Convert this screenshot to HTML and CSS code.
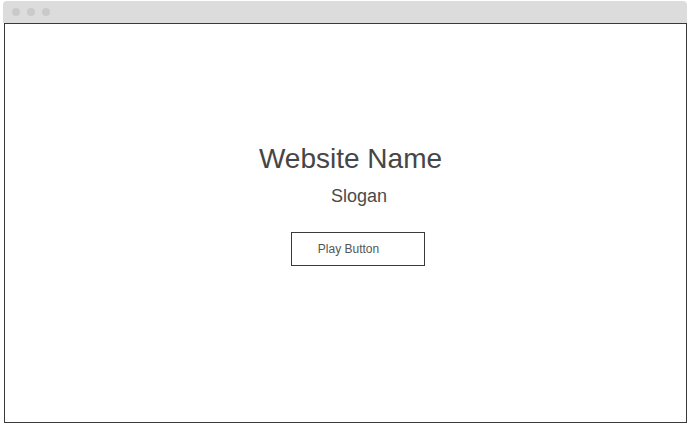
FILE: index.html
```html
<!DOCTYPE html>
<html>
<head>
<meta charset="utf-8">
<link rel="stylesheet" href="styles.css">
</head>
<body>
<div class="window">
  <div class="titlebar">
    <span class="dot"></span>
    <span class="dot"></span>
    <span class="dot"></span>
  </div>
  <div class="content">
    <h1 class="title">Website Name</h1>
    <p class="slogan">Slogan</p>
    <button class="play">Play Button</button>
  </div>
</div>
</body>
</html>
```

FILE: styles.css
```css
html, body {
  margin: 0;
  padding: 0;
  background: #ffffff;
}

body {
  font-family: "Liberation Sans", Arial, sans-serif;
}

.window {
  margin: 1px 0 0 3px;
  width: 684px;
}

.titlebar {
  height: 22px;
  background: #dcdcdc;
  border-radius: 4px 4px 0 0;
  display: flex;
  align-items: center;
  gap: 7px;
  padding-left: 9px;
  box-sizing: border-box;
}

.dot {
  width: 8px;
  height: 8px;
  border-radius: 50%;
  background: #cacaca;
}

.content {
  margin-left: 1px;
  width: 683px;
  height: 400px;
  box-sizing: border-box;
  border: 1px solid #3a3a3a;
  background: #ffffff;
  display: flex;
  flex-direction: column;
  align-items: center;
  padding-top: 119px;
}

.title {
  margin: 0;
  padding-left: 10px;
  font-size: 28px;
  line-height: 32px;
  font-weight: normal;
  color: #464646;
}

.slogan {
  margin: 10px 0 0 0;
  padding-left: 27px;
  font-size: 18px;
  line-height: 22px;
  color: #4a4a4a;
}

.play {
  margin: 25px 0 0 24px;
  width: 134px;
  height: 34px;
  box-sizing: border-box;
  border: 1px solid #3a3a3a;
  background: #ffffff;
  padding: 9px 18px 0 0;
  font-family: "Liberation Sans", Arial, sans-serif;
  font-size: 12px;
  line-height: 14px;
  color: #555555;
  text-align: center;
  display: flex;
  justify-content: center;
  align-items: flex-start;
}
```
